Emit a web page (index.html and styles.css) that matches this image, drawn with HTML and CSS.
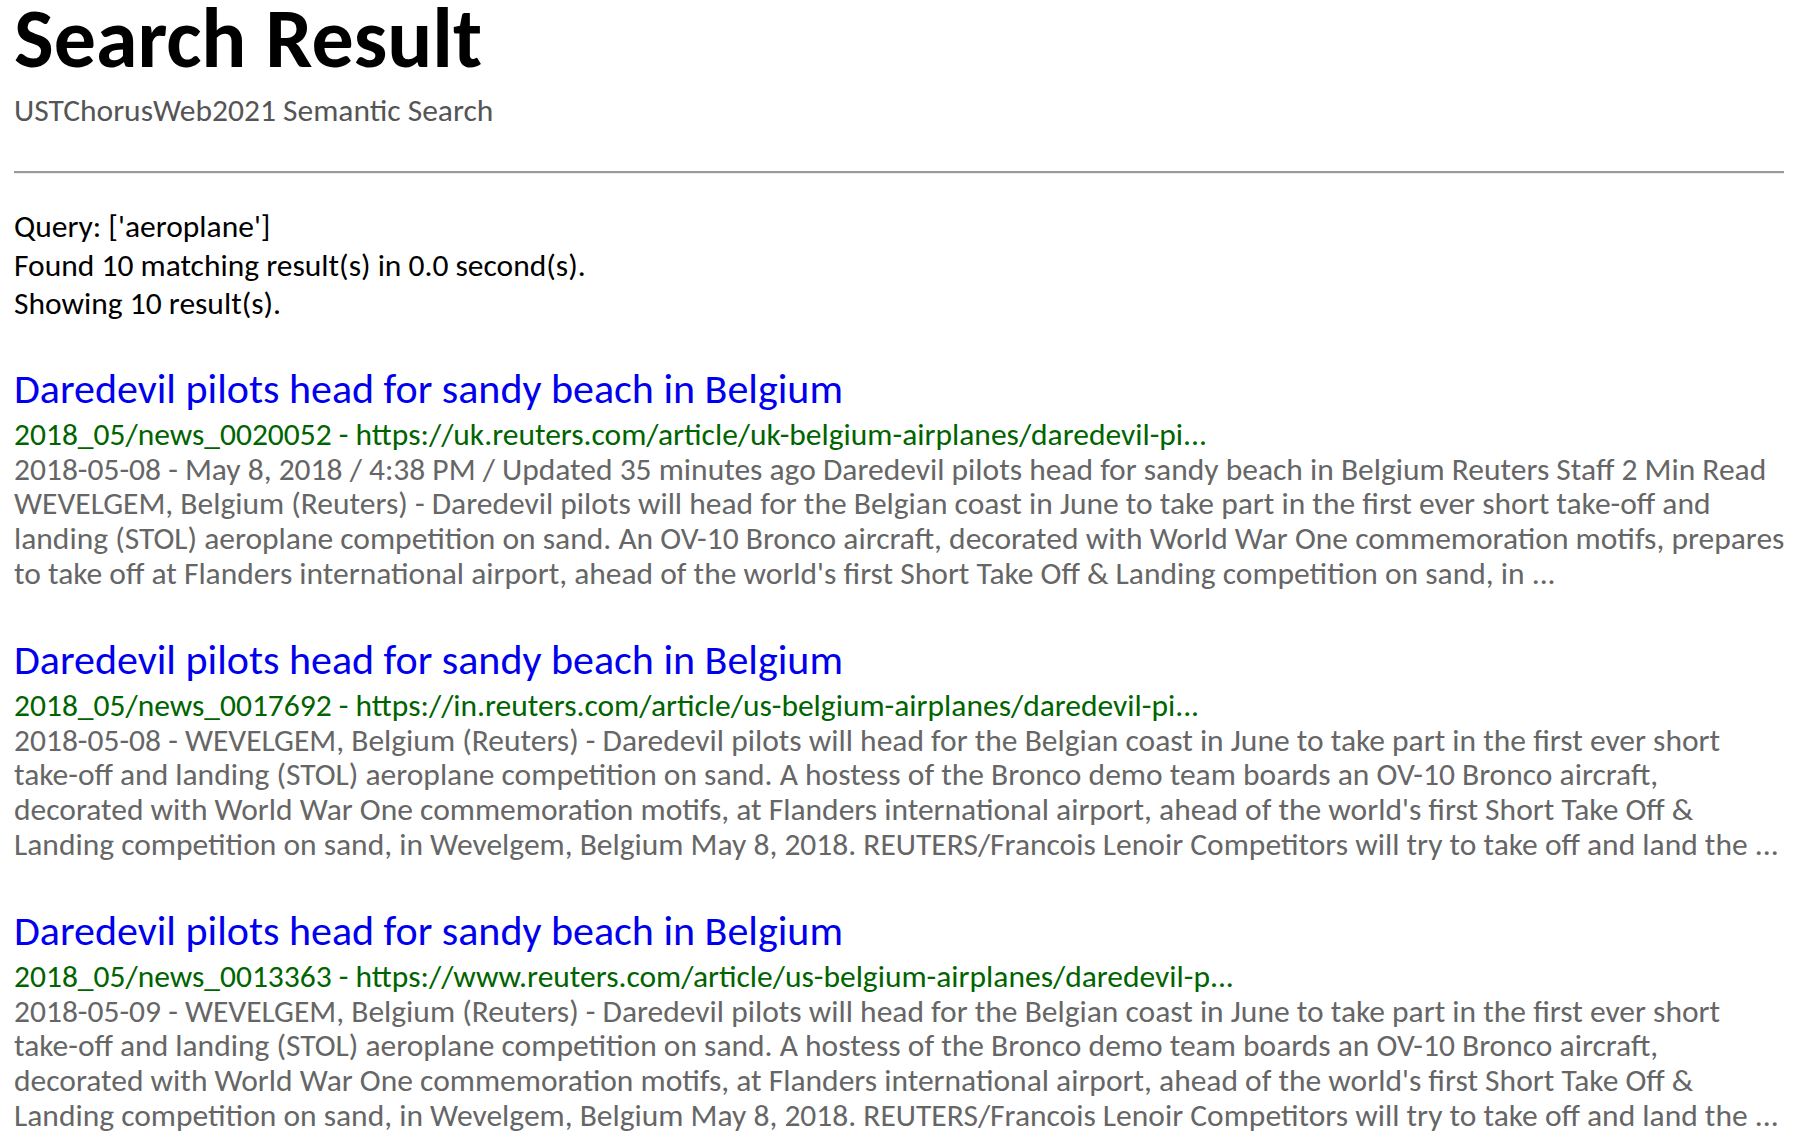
FILE: index.html
```html
<!DOCTYPE html>
<html lang="en">
<head>
<meta charset="utf-8">
<title>Search Result</title>
<link rel="stylesheet" href="styles.css">
</head>
<body>
<div class="page">
  <header class="header">
    <h1 class="title">Search Result</h1>
    <p class="subtitle">USTChorusWeb2021 Semantic Search</p>
  </header>
  <hr class="divider">
  <section class="summary">
    <div>Query: ['aeroplane']</div>
    <div>Found 10 matching result(s) in 0.0 second(s).</div>
    <div>Showing 10 result(s).</div>
  </section>
  <section class="results">
    <article class="result">
      <a class="result-title" href="#">Daredevil pilots head for sandy beach in Belgium</a>
      <div class="result-body">
        <div class="result-url">2018_05/news_0020052 - https://uk.reuters.com/article/uk-belgium-airplanes/daredevil-pi...</div>
        <p class="result-snippet">2018-05-08 - May 8, 2018 / 4:38 PM / Updated 35 minutes ago Daredevil pilots head for sandy beach in Belgium Reuters Staff 2 Min Read WEVELGEM, Belgium (Reuters) - Daredevil pilots will head for the Belgian coast in June to take part in the first ever short take-off and landing (STOL) aeroplane competition on sand. An OV-10 Bronco aircraft, decorated with World War One commemoration motifs, prepares to take off at Flanders international airport, ahead of the world's first Short Take Off &amp; Landing competition on sand, in ...</p>
      </div>
    </article>
    <article class="result">
      <a class="result-title" href="#">Daredevil pilots head for sandy beach in Belgium</a>
      <div class="result-body">
        <div class="result-url">2018_05/news_0017692 - https://in.reuters.com/article/us-belgium-airplanes/daredevil-pi...</div>
        <p class="result-snippet">2018-05-08 - WEVELGEM, Belgium (Reuters) - Daredevil pilots will head for the Belgian coast in June to take part in the first ever short take-off and landing (STOL) aeroplane competition on sand. A hostess of the Bronco demo team boards an OV-10 Bronco aircraft, decorated with World War One commemoration motifs, at Flanders international airport, ahead of the world's first Short Take Off &amp; Landing competition on sand, in Wevelgem, Belgium May 8, 2018. REUTERS/Francois Lenoir Competitors will try to take off and land the ...</p>
      </div>
    </article>
    <article class="result">
      <a class="result-title" href="#">Daredevil pilots head for sandy beach in Belgium</a>
      <div class="result-body">
        <div class="result-url">2018_05/news_0013363 - https://www.reuters.com/article/us-belgium-airplanes/daredevil-p...</div>
        <p class="result-snippet">2018-05-09 - WEVELGEM, Belgium (Reuters) - Daredevil pilots will head for the Belgian coast in June to take part in the first ever short take-off and landing (STOL) aeroplane competition on sand. A hostess of the Bronco demo team boards an OV-10 Bronco aircraft, decorated with World War One commemoration motifs, at Flanders international airport, ahead of the world's first Short Take Off &amp; Landing competition on sand, in Wevelgem, Belgium May 8, 2018. REUTERS/Francois Lenoir Competitors will try to take off and land the ...</p>
      </div>
    </article>
  </section>
</div>
</body>
</html>
```
FILE: styles.css
```css
html, body {
  margin: 0;
  padding: 0;
  background: #ffffff;
}

body {
  font-family: "Carlito", "Lato", "Liberation Sans", sans-serif;
  color: #000000;
}

.page {
  padding: 0 4px 40px 14px;
}

.header {
  display: flex;
  flex-direction: column;
}

.title {
  margin: 0;
  font-size: 84px;
  line-height: 78.6px;
  font-weight: bold;
  color: #000000;
}

.subtitle {
  margin: 12.4px 0 0;
  font-size: 31.5px;
  line-height: 38.4px;
  color: #555555;
}

.divider {
  margin: 42px 7px 0 0;
  height: 0;
  border: 0;
  border-top: 2px solid #9a9a9a;
  border-bottom: 1px solid #ececec;
}

.summary {
  margin-top: 33px;
  font-size: 31.5px;
  line-height: 38.4px;
  color: #000000;
}

.results {
  margin-top: 40.3px;
  display: flex;
  flex-direction: column;
  gap: 43.6px;
}

.result {
  display: flex;
  flex-direction: column;
}

.result-title {
  display: block;
  margin-bottom: 2.9px;
  font-size: 42px;
  line-height: 51.2px;
  color: #0000ee;
  text-decoration: none;
}

.result-body {
  font-size: 31.5px;
  line-height: 34.65px;
}

.result-url {
  color: #006400;
}

.result-snippet {
  margin: 0;
  color: #666666;
}
```
